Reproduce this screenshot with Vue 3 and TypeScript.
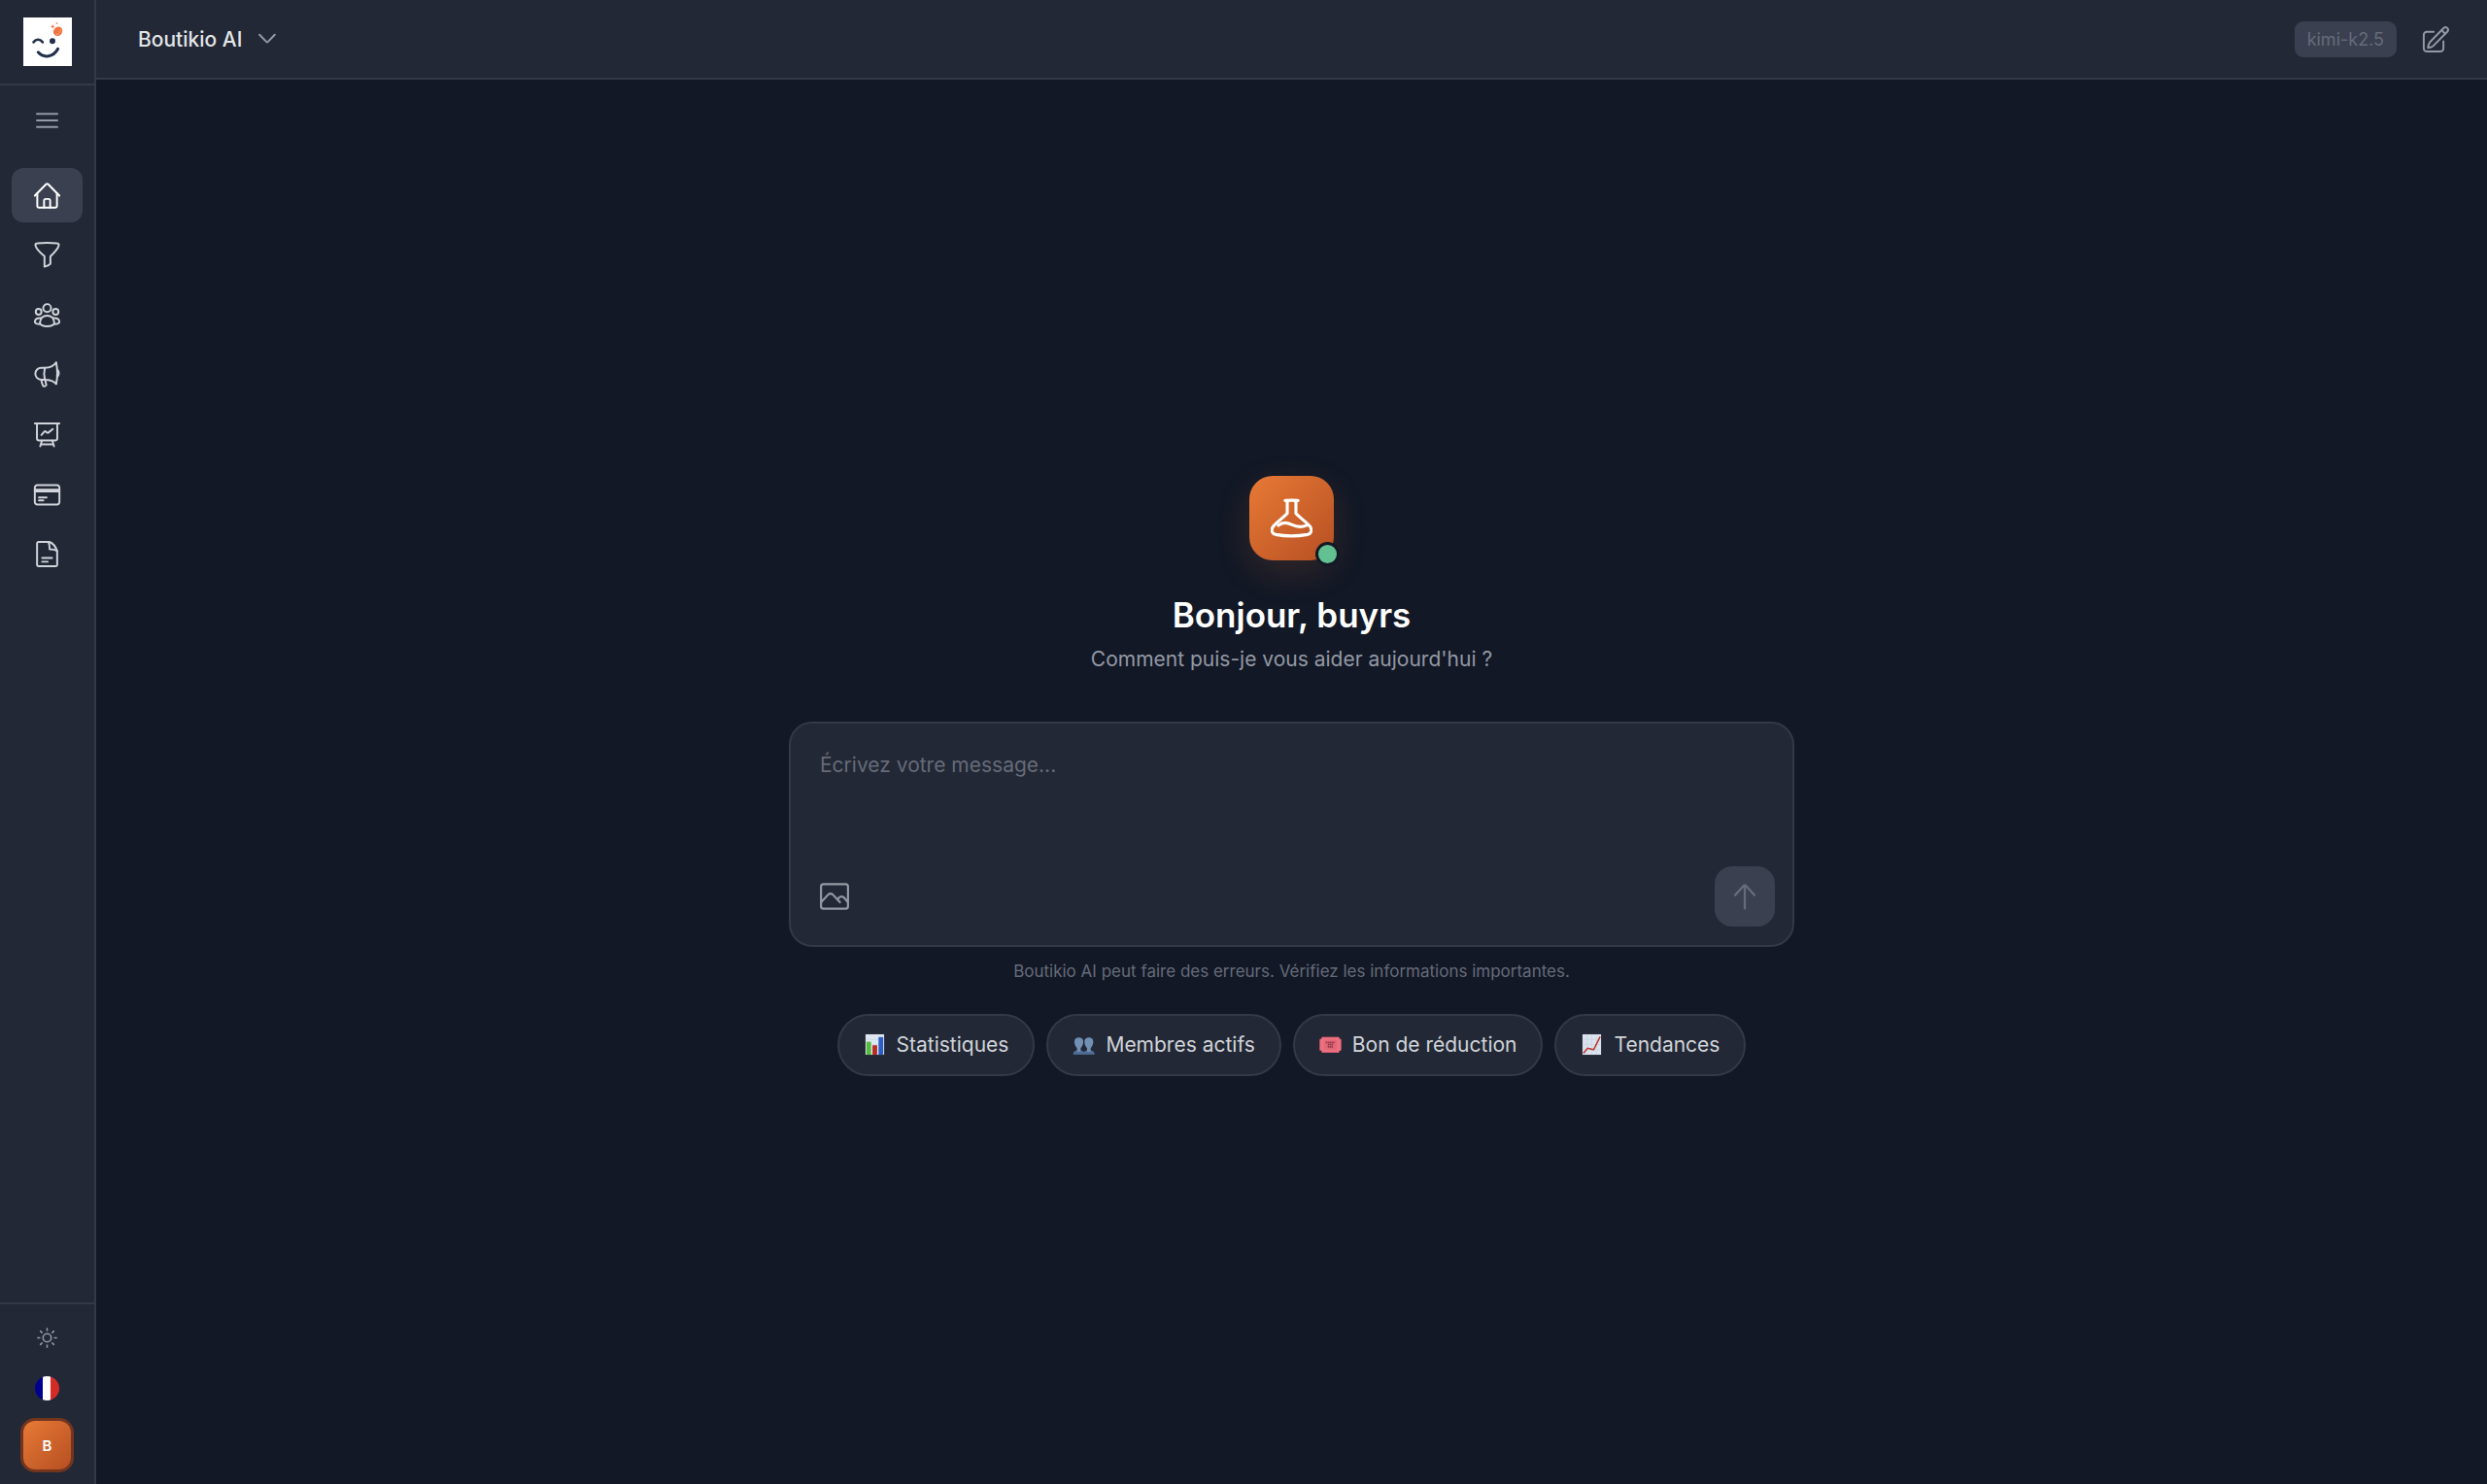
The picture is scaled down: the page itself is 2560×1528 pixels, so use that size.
<script setup lang="ts">
import { ref } from 'vue'

interface NavItem {
  id: string
  label: string
  paths: string[]
}

interface Suggestion {
  icon: 'stats' | 'members' | 'ticket' | 'trend'
  label: string
}

const message = ref<string>('')
const activeId = ref<string>('home')

const navItems: NavItem[] = [
  {
    id: 'home',
    label: 'Accueil',
    paths: [
      'M.75 12 11 1.5a1.4 1.4 0 0 1 2 0L23.25 12',
      'M3 9.9V21.6a1.3 1.3 0 0 0 1.3 1.3h15.4a1.3 1.3 0 0 0 1.3-1.3V9.9',
      'M9.2 22.9v-6.4A1.4 1.4 0 0 1 10.6 15h2.8a1.4 1.4 0 0 1 1.4 1.5v6.4',
    ],
  },
  {
    id: 'funnels',
    label: 'Tunnels',
    paths: [
      'M1.3 3.1C1.2 1.9 2 1.5 3.1 1.4c5.6-.7 12.2-.7 17.8 0C22 1.5 22.9 1.9 22.7 3.1 22.2 6.7 18.7 9.6 15 13.3v6.9c-1.1 1.3-3.4 2.2-5.4 2.6V13.3C5.5 9.6 1.8 6.7 1.3 3.1Z',
    ],
  },
  {
    id: 'members',
    label: 'Membres',
    paths: [
      'M12 1.9a3.6 3.6 0 1 1 0 7.2 3.6 3.6 0 0 1 0-7.2Z',
      'M4.2 6.3a2.6 2.6 0 1 1 0 5.2 2.6 2.6 0 0 1 0-5.2Z',
      'M19.8 6.3a2.6 2.6 0 1 1 0 5.2 2.6 2.6 0 0 1 0-5.2Z',
      'M12 12.5c3.4 0 6.1 2 6.6 6.2.2 1.9-2.6 3.5-6.6 3.5s-6.8-1.6-6.6-3.5c.5-4.2 3.2-6.2 6.6-6.2Z',
      'M6 14.7C3.3 14.3 1 15.5.75 18c-.1 1.4 1.8 2.2 4.9 2.3',
      'M18 14.7c2.7-.4 5 .8 5.25 3.3.1 1.4-1.8 2.2-4.9 2.3',
    ],
  },
  {
    id: 'marketing',
    label: 'Marketing',
    paths: [
      'M10 6H6.6a5.4 5.4 0 0 0 0 10.8H10',
      'M20.3 1.2C18.5 3.6 15 5.9 9.9 6c-.8 3.4-.8 7.4 0 10.8 4.5 0 8.3 1.3 10.4 3.9',
      'M20.3 1.2c1.2 5.8 1.2 13.7 0 19.5',
      'M21.3 7.8c1.9 1.5 1.9 4.7 0 6.3',
      'M6.7 16.9c.2 2 .7 3.9 1.5 5.4.7 1 3.2.5 3.1-.8-.5-1.5-.9-3.1-1-4.7',
    ],
  },
  {
    id: 'analytics',
    label: 'Analyses',
    paths: [
      'M.75 1.7h22.5',
      'M2.7 1.7v13.8a1.8 1.8 0 0 0 1.8 1.8h15a1.8 1.8 0 0 0 1.8-1.8V1.7',
      'm7.2 17.5-1.5 5.2m11.1-5.2 1.5 5.2M6.5 20.9h11',
      'm6.8 12.3 2.7-3a.9.9 0 0 1 1.2-.1l1.2 1a1 1 0 0 0 1.3-.1L17.2 6.9',
    ],
  },
  {
    id: 'payments',
    label: 'Paiements',
    paths: [
      'M3 3.2h18a2.2 2.2 0 0 1 2.25 2.2v13.2A2.2 2.2 0 0 1 21 20.8H3a2.2 2.2 0 0 1-2.25-2.2V5.4A2.2 2.2 0 0 1 3 3.2Z',
      'M.75 7.3h22.5M.75 8.9h22.5M4.5 14.5h7M4.5 17.1h4',
    ],
  },
  {
    id: 'documents',
    label: 'Documents',
    paths: [
      'M14 .9H4.2A1.4 1.4 0 0 0 2.8 2.3v19.4a1.4 1.4 0 0 0 1.4 1.4h15.6a1.4 1.4 0 0 0 1.4-1.4V9.5C19.8 5.2 17.5 2 14 .9Z',
      'M13.3 1c.7 2 1 4 1 6.5 2.5 0 4.9.4 6.9 1.4',
      'M7.5 15.6h9M7.5 19h5',
    ],
  },
]

const suggestions: Suggestion[] = [
  { icon: 'stats', label: 'Statistiques' },
  { icon: 'members', label: 'Membres actifs' },
  { icon: 'ticket', label: 'Bon de réduction' },
  { icon: 'trend', label: 'Tendances' },
]
</script>

<template>
  <div class="app">
    <aside class="sidebar">
      <div class="brand">
        <svg class="brand-logo" viewBox="0 0 50 50" role="img" aria-label="Boutikio">
          <rect width="50" height="50" fill="#fff" />
          <g fill="none" stroke="#22304a" stroke-linecap="round" stroke-width="2.6">
            <path d="M10.5 25.4c2.8-3.6 6.5-3.5 9.4 0" />
            <path d="M15.3 35.8c5.5 6.3 15.7 5.4 20.3-3.5" stroke-width="3" />
          </g>
          <circle cx="30" cy="24.3" r="3" fill="#22304a" />
          <ellipse cx="35.6" cy="14.3" rx="5" ry="4.4" transform="rotate(-45 35.6 14.3)" fill="#ef7540" />
          <path d="M32.3 17.9c2.5.4 5.6-2.3 6.5-5.9" fill="none" stroke="#f9b795" stroke-width=".7" />
          <path d="m30.3 7 .7 1.7 1.7.7-1.7.7-.7 1.7-.7-1.7-1.7-.7 1.7-.7Z" fill="#ef7540" />
          <circle cx="34.5" cy="6" r="1" fill="#f29a72" />
        </svg>
      </div>

      <button class="menu-toggle" type="button" aria-label="Ouvrir le menu">
        <svg viewBox="0 0 24 18" fill="none" stroke="currentColor" stroke-width="2" stroke-linecap="round">
          <path d="M1.5 2.2h21M1.5 9h21M1.5 15.8h21" />
        </svg>
      </button>

      <nav class="nav" aria-label="Navigation principale">
        <a
          v-for="item in navItems"
          :key="item.id"
          href="#"
          class="nav-link"
          :class="{ active: item.id === activeId }"
          :aria-label="item.label"
          @click.prevent="activeId = item.id"
        >
          <svg class="icon" viewBox="0 0 24 24">
            <path v-for="d in item.paths" :key="d" :d="d" />
          </svg>
        </a>
      </nav>

      <div class="sidebar-footer">
        <button class="round-button" type="button" aria-label="Changer de thème">
          <svg class="sun" viewBox="0 0 20 20">
            <circle cx="10" cy="10" r="4" />
            <path d="M10 .8v2M10 17.2v2M.8 10h2M17.2 10h2M3.5 3.5l1.4 1.4M15.1 15.1l1.4 1.4M3.5 16.5l1.4-1.4M15.1 4.9l1.4-1.4" />
          </svg>
        </button>
        <button class="round-button" type="button" aria-label="Langue : français">
          <span class="flag"></span>
        </button>
        <button class="avatar" type="button" aria-label="Compte B">B</button>
      </div>
    </aside>

    <div class="page">
      <header class="topbar">
        <button class="assistant-picker" type="button">
          Boutikio AI
          <svg class="chevron" viewBox="0 0 18 12"><path d="m1.2 1.7 7.1 7.4a1 1 0 0 0 1.4 0l7.1-7.4" /></svg>
        </button>
        <div class="topbar-right">
          <span class="model">kimi-k2.5</span>
          <button class="compose" type="button" aria-label="Nouvelle conversation">
            <svg class="icon" viewBox="0 0 24 24">
              <path d="M9.9 5.2H3.6A2.8 2.8 0 0 0 .8 8v12.4a2.8 2.8 0 0 0 2.8 2.8H16a2.8 2.8 0 0 0 2.8-2.8v-6.7" />
              <path d="M4.7 19.8c.1-2.2.6-3.9 1.8-5.3L19.2 1.6a2.3 2.3 0 0 1 3.2 3.3L9.8 17.7c-1.3 1.2-3 1.9-5.1 2.1Z" />
              <path d="m17.2 3.7 3.2 3.2" />
            </svg>
          </button>
        </div>
      </header>

      <main class="content">
        <div class="hero-logo">
          <svg viewBox="0 0 24 24">
            <path d="M8.3 1.9c2.5-.2 4.9-.2 7.4 0" />
            <path d="M9.5 2v7.3c-2.5 2.6-5.5 4.5-8.1 7.5-1.4 2-.9 4.1 1.4 4.6 6 1.1 12.4 1.1 18.4 0 2.3-.5 2.8-2.6 1.4-4.6-2.6-3-5.6-4.9-8.1-7.5V2" />
            <path d="M4.4 16.2c2.2-1.8 5-1.8 7.6-.5s6 1.6 8.7.4" />
          </svg>
          <span class="status-dot"></span>
        </div>
        <h1>Bonjour, buyrs</h1>
        <p class="subtitle">Comment puis-je vous aider aujourd'hui ?</p>

        <form class="composer" @submit.prevent>
          <textarea v-model="message" aria-label="Message" placeholder="Écrivez votre message..."></textarea>
          <div class="composer-actions">
            <button class="attach" type="button" aria-label="Ajouter une image">
              <svg class="icon" viewBox="0 0 24 24">
                <rect x=".9" y="1.9" width="22.2" height="20.2" rx="2" />
                <path d="M.9 16.8 6.8 10.5a2.6 2.6 0 0 1 3.8 0l5.9 6.3M14.7 14.5c.8-2.7 3.8-3.1 5.4-1.3l3 3.6" />
              </svg>
            </button>
            <button class="send" type="submit" aria-label="Envoyer">
              <svg viewBox="0 0 24 24"><path d="M12 22.6V2.4M3.5 10.8 11.2 2.4a1.1 1.1 0 0 1 1.6 0l7.7 8.4" /></svg>
            </button>
          </div>
        </form>

        <p class="disclaimer">Boutikio AI peut faire des erreurs. Vérifiez les informations importantes.</p>

        <div class="suggestions">
          <button v-for="s in suggestions" :key="s.label" class="chip" type="button">
            <svg class="emoji" viewBox="0 0 24 24" aria-hidden="true">
              <template v-if="s.icon === 'stats'">
                <rect x="2" y="1" width="20" height="22" fill="#dfe6f0" />
                <path d="M2 6.5h20M2 12h20M2 17.5h20" stroke="#c6cfdc" stroke-width=".6" />
                <rect x="3" y="9" width="5" height="14" fill="#55bd3e" />
                <rect x="9.5" y="12.8" width="5" height="10.2" fill="#b92a24" />
                <rect x="16" y="4" width="5" height="19" fill="#2b5fc6" />
              </template>
              <template v-else-if="s.icon === 'members'">
                <g fill="#7290b3">
                  <path d="M.8 22.5c0-2.6 1.5-3.2 4-4.2v-2.4C2.7 13.5 1.900 11 2.100 8.300 2.300 5.700 4.200 4.500 6.800 4.500s4.500 1.200 4.700 3.800c.2 2.700-.6 5.200-2.700 7.600v2.400c2.500 1 3.800 1.600 3.800 4.200Z" />
                  <path d="M11.900 22.500c0-2.600 1.200-3.200 3.700-4.200v-2.400c-2.100-2.400-2.900-4.900-2.700-7.600.2-2.600 2.100-3.800 4.700-3.800s4.400 1.200 4.600 3.800c.2 2.700-.6 5.200-2.700 7.600v2.400c2.500 1 4 1.600 4 4.200Z" />
                </g>
                <path d="M.8 22.500c0-2.200 1.200-3 3.400-3.700 1.700 1.200 3.600 1.200 5.300 0 1 .4 1.900.8 2.500 1.500.6-.7 1.500-1.100 2.700-1.500 1.900 1.200 4.200 1.200 6 0 1.800.7 2.800 1.500 2.800 3.700Z" fill="#4c6c96" />
              </template>
              <template v-else-if="s.icon === 'ticket'">
                <path d="M3 4.300h18c.1 1.400.8 2 2.200 2.200v11.600c-1.400.2-2.100.8-2.200 2.200H3c-.1-1.400-.8-2-2.200-2.200V6.500C2.200 6.300 2.900 5.700 3 4.300Z" fill="#ed7281" stroke="#d95f6f" />
                <rect x="5" y="6.800" width="14" height="11" rx="1" fill="#e46778" />
                <path d="M7 9.700h10M9.200 12.200h5.600M9.200 14.400h5.600" stroke="#8f3a49" stroke-width="1.800" stroke-dasharray="1.500 .5" />
              </template>
              <template v-else>
                <rect x="2" y="1" width="20" height="22" fill="#dbe3ee" />
                <path d="M2 6.500h20M2 12h20M2 17.500h20M7 1v22M12 1v22M17 1v22" stroke="#c6cfdc" stroke-width=".6" />
                <path d="m3 21.500 4.500-5.500 6.500 1.500L21 3.500" fill="none" stroke="#c23a33" stroke-width="1.600" />
              </template>
            </svg>
            {{ s.label }}
          </button>
        </div>
      </main>
    </div>
  </div>
</template>

<style>
body {
  margin: 0;
  background: #121826;
}
</style>

<style scoped>
.app {
  display: flex;
  min-height: 100vh;
  background: #121826;
  color: #d1d4da;
  font-family: Inter, "Liberation Sans", sans-serif;
  font-size: 21px;
}

button {
  display: flex;
  align-items: center;
  justify-content: center;
  padding: 0;
  border: 0;
  background: none;
  color: inherit;
  font: inherit;
  cursor: pointer;
}

svg {
  display: block;
  flex: none;
}

.icon {
  width: 27px;
  height: 27px;
  overflow: visible;
  fill: none;
  stroke: currentColor;
  stroke-width: 1.75;
  stroke-linecap: round;
  stroke-linejoin: round;
}

.sidebar {
  display: flex;
  flex: none;
  flex-direction: column;
  box-sizing: border-box;
  width: 99px;
  border-right: 2px solid #333947;
  background: #222835;
}

.brand {
  display: flex;
  justify-content: center;
  padding: 18px 0;
  border-bottom: 2px solid #333947;
}

.brand-logo {
  width: 50px;
  height: 50px;
}

.menu-toggle {
  height: 50px;
  margin: 11px 12px 24px;
  color: #9499a4;
}

.menu-toggle svg {
  width: 25px;
  height: 18px;
}

.nav {
  display: flex;
  flex-direction: column;
  justify-content: space-between;
  min-height: 426px;
  padding: 0 12px;
}

.nav-link {
  display: flex;
  align-items: center;
  justify-content: center;
  height: 56px;
  border-radius: 12px;
  color: #d1d4da;
}

.nav-link.active {
  background: #3a4050;
  color: #fff;
}

.sidebar-footer {
  display: flex;
  flex-direction: column;
  align-items: center;
  margin-top: auto;
  padding: 8px 0 15px;
  border-top: 2px solid #333947;
}

.round-button {
  width: 53px;
  height: 52px;
  color: #9499a4;
}

.sun {
  width: 21px;
  height: 21px;
  fill: none;
  stroke: currentColor;
  stroke-width: 1.5;
  stroke-linecap: round;
}

.flag {
  width: 25px;
  height: 25px;
  border-radius: 50%;
  background: linear-gradient(to right, #00008f 33%, #fff 33% 66%, #d32c27 66%);
}

.avatar {
  width: 49px;
  height: 50px;
  margin-top: 8px;
  border-radius: 12px;
  background: linear-gradient(135deg, #e87a36, #b64f22);
  box-shadow: 0 0 0 3px #74351f;
  color: #fff;
  font-size: 15px;
  font-weight: 600;
}

.page {
  display: flex;
  flex: 1;
  flex-direction: column;
  min-width: 0;
}

.topbar {
  display: flex;
  align-items: center;
  justify-content: space-between;
  box-sizing: border-box;
  height: 82px;
  padding: 0 39px 0 43px;
  border-bottom: 2px solid #333947;
  background: #222835;
}

.assistant-picker {
  gap: 17px;
  color: #e3e5e8;
  font-weight: 500;
}

.chevron {
  width: 18px;
  height: 12px;
  fill: none;
  stroke: #9499a4;
  stroke-width: 2;
  stroke-linecap: round;
}

.topbar-right {
  display: flex;
  align-items: center;
  gap: 27px;
}

.model {
  padding: 0 13px;
  border-radius: 9px;
  background: #3a4050;
  color: #666b79;
  font-size: 18px;
  line-height: 37px;
}

.compose {
  color: #9499a4;
}

.content {
  display: flex;
  flex: 1;
  flex-direction: column;
  align-items: center;
  justify-content: center;
  padding: 0 24px 13px;
}

.hero-logo {
  position: relative;
  display: flex;
  align-items: center;
  justify-content: center;
  width: 87px;
  height: 87px;
  border-radius: 24px;
  background: linear-gradient(135deg, #e87a36, #b64f22);
  box-shadow: 0 12px 36px rgba(232, 122, 54, 0.15);
}

.hero-logo svg {
  width: 43px;
  height: 43px;
  fill: none;
  stroke: #fff;
  stroke-width: 1.75;
  stroke-linecap: round;
  stroke-linejoin: round;
}

.status-dot {
  position: absolute;
  right: -6px;
  bottom: -6px;
  width: 19px;
  height: 19px;
  border: 3px solid #121826;
  border-radius: 50%;
  background: #63c091;
}

h1 {
  margin: 34px 0 8px;
  color: #fff;
  font-size: 35px;
  font-weight: 600;
  line-height: 44px;
}

.subtitle {
  margin: 0;
  color: #9499a4;
  line-height: 32px;
}

.composer {
  display: flex;
  flex-direction: column;
  box-sizing: border-box;
  width: 100%;
  max-width: 1035px;
  margin-top: 48px;
  padding: 26px 18px 19px 30px;
  border: 2px solid #333947;
  border-radius: 24px;
  background: #222835;
}

textarea {
  height: 121px;
  padding: 0;
  border: 0;
  outline: 0;
  resize: none;
  background: none;
  color: #e3e5e8;
  font: inherit;
  line-height: 34px;
}

textarea::placeholder {
  color: #666b79;
  opacity: 1;
}

.composer-actions {
  display: flex;
  align-items: center;
  justify-content: space-between;
}

.attach {
  color: #9499a4;
}

.attach .icon {
  width: 30px;
  height: 30px;
}

.send {
  width: 62px;
  height: 62px;
  border-radius: 18px;
  background: #3a4050;
  color: #666b79;
}

.send svg {
  width: 28px;
  height: 28px;
  fill: none;
  stroke: currentColor;
  stroke-width: 2;
  stroke-linecap: round;
}

.disclaimer {
  margin: 13px 0 32px;
  color: #666b79;
  font-size: 17px;
  line-height: 24px;
}

.suggestions {
  display: flex;
  flex-wrap: wrap;
  justify-content: center;
  gap: 12px;
}

.chip {
  gap: 11px;
  height: 64px;
  padding: 0 25px;
  border: 2px solid #333947;
  border-radius: 32px;
  background: #222835;
  color: #d1d4da;
}

.emoji {
  width: 23px;
  height: 23px;
}
</style>
